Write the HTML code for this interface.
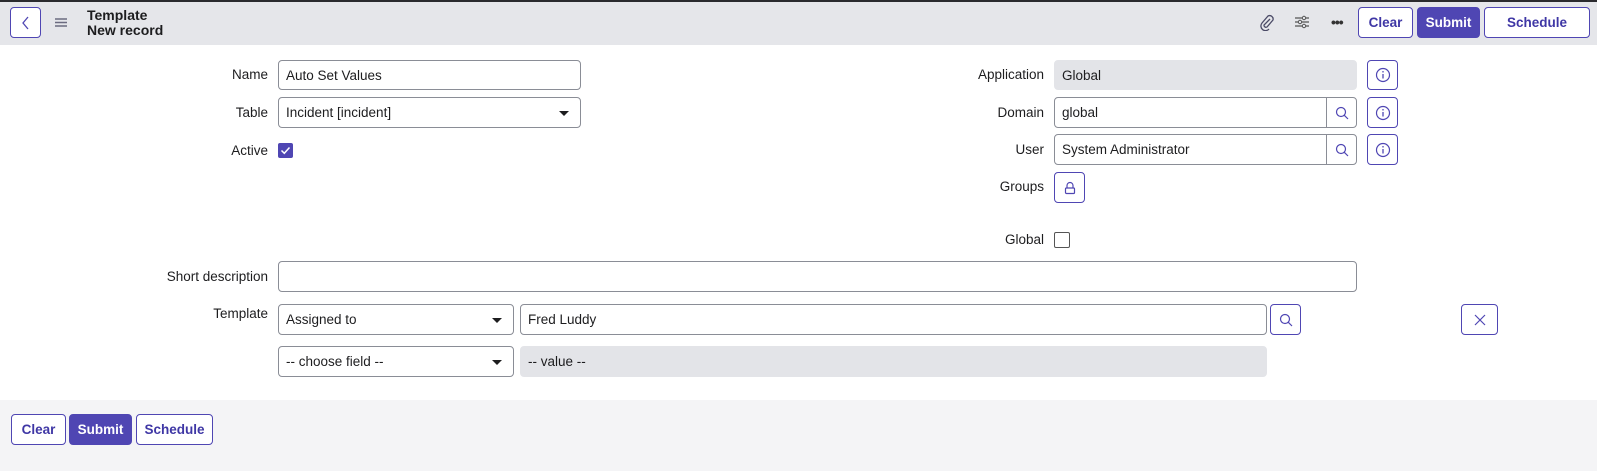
<!DOCTYPE html>
<html><head><style>
*{box-sizing:border-box;margin:0;padding:0}
body{width:1597px;height:471px;position:relative;background:#fff;font-family:"Liberation Sans",sans-serif;font-size:13.5px;color:#1d1d1f;overflow:hidden}
.a{position:absolute}
.hdr{left:0;top:0;width:1597px;height:45px;background:#e5e6ea;border-top:2px solid #2a2a2e}
.btn{position:absolute;border:1px solid #4f46b3;border-radius:4px;background:#fff;color:#3f37a5;font-weight:bold;font-size:13.5px;display:flex;align-items:center;justify-content:center}
.pri{background:#4f46b3;color:#fff}
.lbl{position:absolute;text-align:right;width:200px;font-size:13.5px}
.inp{position:absolute;border:1px solid #8a8d96;border-radius:4px;background:#fff;padding-left:7px;display:flex;align-items:center;font-size:13.5px}
.ro{background:#e3e4e8;border-color:#e3e4e8}
.arr{position:absolute;right:11px;top:50%;margin-top:-2px;width:0;height:0;border-left:5px solid transparent;border-right:5px solid transparent;border-top:5px solid #1d1d1f}
.sb{position:absolute;top:0;right:0;bottom:0;width:30px;border-left:1px solid #8a8d96;display:flex;align-items:center;justify-content:center}
.ib{position:absolute;border:1px solid #4f46b3;border-radius:4px;background:#fff;display:flex;align-items:center;justify-content:center}
</style></head><body>
<div class="a hdr"></div>
<div class="ib" style="left:10px;top:7px;width:31px;height:31px"><svg width="12" height="14" viewBox="0 0 12 14"><path d="M8 1 L3 7 L8 13" fill="none" stroke="#4f46b3" stroke-width="1.3"/></svg></div>
<svg class="a" style="left:55px;top:18px" width="12" height="9"><path d="M0 1H12M0 4.5H12M0 8H12" stroke="#6b6b80" stroke-width="1.4"/></svg>
<div class="a" style="left:87px;top:8px;font-weight:bold;font-size:14px;line-height:15px">Template<br>New record</div>
<svg class="a" style="left:1259px;top:14px" width="16" height="17" viewBox="0 0 16 17"><path d="M11 5 L5 11 A2 2 0 0 0 8 13 L14 6 A3.5 3.5 0 0 0 9 2 L3 9 A4.5 4.5 0 0 0 10 15" fill="none" stroke="#4a4a66" stroke-width="1.3"/></svg>
<svg class="a" style="left:1295px;top:15px" width="14" height="14"><path d="M0 3H14M0 7H14M0 11H14" stroke="#555" stroke-width="1.2"/><circle cx="9" cy="3" r="1.7" fill="#e5e6ea" stroke="#555"/><circle cx="5" cy="7" r="1.7" fill="#e5e6ea" stroke="#555"/><circle cx="9" cy="11" r="1.7" fill="#e5e6ea" stroke="#555"/></svg>
<div class="a" style="left:1331px;top:14px;font-weight:bold;font-size:14px;color:#333;letter-spacing:-1px">•••</div>
<div class="btn" style="left:1358px;top:7px;width:55px;height:31px">Clear</div>
<div class="btn pri" style="left:1417px;top:7px;width:63px;height:31px">Submit</div>
<div class="btn" style="left:1484px;top:7px;width:106px;height:31px">Schedule</div>

<div class="lbl" style="left:68px;top:67px">Name</div>
<div class="inp" style="left:278px;top:60px;width:303px;height:30px">Auto Set Values</div>
<div class="lbl" style="left:68px;top:105px">Table</div>
<div class="inp" style="left:278px;top:97px;width:303px;height:31px">Incident [incident]<span class="arr"></span></div>
<div class="lbl" style="left:68px;top:143px">Active</div>
<div class="a" style="left:278px;top:143px;width:15px;height:15px;background:#4f46b3;border-radius:2px"><svg width="15" height="15"><path d="M3.5 7.5L6.3 10.3L11.5 4.5" fill="none" stroke="#fff" stroke-width="1.5"/></svg></div>

<div class="lbl" style="left:844px;top:67px">Application</div>
<div class="inp ro" style="left:1054px;top:60px;width:303px;height:30px">Global</div>
<div class="lbl" style="left:844px;top:105px">Domain</div>
<div class="inp" style="left:1054px;top:97px;width:303px;height:31px">global<div class="sb"><svg width="14" height="14"><circle cx="6" cy="6" r="4.5" fill="none" stroke="#4f46b3" stroke-width="1.2"/><path d="M9.3 9.3L13 13" stroke="#4f46b3" stroke-width="1.2"/></svg></div></div>
<div class="lbl" style="left:844px;top:142px">User</div>
<div class="inp" style="left:1054px;top:134px;width:303px;height:31px">System Administrator<div class="sb"><svg width="14" height="14"><circle cx="6" cy="6" r="4.5" fill="none" stroke="#4f46b3" stroke-width="1.2"/><path d="M9.3 9.3L13 13" stroke="#4f46b3" stroke-width="1.2"/></svg></div></div>
<div class="lbl" style="left:844px;top:179px">Groups</div>
<div class="ib" style="left:1054px;top:172px;width:31px;height:31px"><svg width="14" height="14"><path d="M4 7V4.5A3 3 0 0 1 10 4.5V7" fill="none" stroke="#4f46b3" stroke-width="1.2"/><rect x="2.5" y="7" width="9" height="5.5" rx="1" fill="none" stroke="#4f46b3" stroke-width="1.2"/></svg></div>
<div class="lbl" style="left:844px;top:232px">Global</div>
<div class="a" style="left:1054px;top:232px;width:16px;height:16px;border:1px solid #555;border-radius:2px"></div>
<div class="ib" style="left:1367px;top:60px;width:31px;height:30px"><svg width="16" height="16"><circle cx="8" cy="8" r="6.5" fill="none" stroke="#4f46b3" stroke-width="1.2"/><path d="M8 7V11.5" stroke="#4f46b3" stroke-width="1.3"/><circle cx="8" cy="4.8" r=".8" fill="#4f46b3"/></svg></div>
<div class="ib" style="left:1367px;top:97px;width:31px;height:31px"><svg width="16" height="16"><circle cx="8" cy="8" r="6.5" fill="none" stroke="#4f46b3" stroke-width="1.2"/><path d="M8 7V11.5" stroke="#4f46b3" stroke-width="1.3"/><circle cx="8" cy="4.8" r=".8" fill="#4f46b3"/></svg></div>
<div class="ib" style="left:1367px;top:134px;width:31px;height:31px"><svg width="16" height="16"><circle cx="8" cy="8" r="6.5" fill="none" stroke="#4f46b3" stroke-width="1.2"/><path d="M8 7V11.5" stroke="#4f46b3" stroke-width="1.3"/><circle cx="8" cy="4.8" r=".8" fill="#4f46b3"/></svg></div>

<div class="lbl" style="left:68px;top:269px">Short description</div>
<div class="inp" style="left:278px;top:261px;width:1079px;height:31px"></div>
<div class="lbl" style="left:68px;top:306px">Template</div>
<div class="inp" style="left:278px;top:304px;width:236px;height:31px">Assigned to<span class="arr"></span></div>
<div class="inp" style="left:520px;top:304px;width:747px;height:31px">Fred Luddy</div>
<div class="ib" style="left:1270px;top:304px;width:31px;height:31px"><svg width="14" height="14"><circle cx="6" cy="6" r="4.5" fill="none" stroke="#4f46b3" stroke-width="1.2"/><path d="M9.3 9.3L13 13" stroke="#4f46b3" stroke-width="1.2"/></svg></div>
<div class="ib" style="left:1461px;top:304px;width:37px;height:31px"><svg width="12" height="12"><path d="M1 1L11 11M11 1L1 11" stroke="#4f46b3" stroke-width="1.2"/></svg></div>
<div class="inp" style="left:278px;top:346px;width:236px;height:31px">-- choose field --<span class="arr"></span></div>
<div class="inp ro" style="left:520px;top:346px;width:747px;height:31px">-- value --</div>

<div class="a" style="left:0;top:400px;width:1597px;height:71px;background:#f4f4f6"></div>
<div class="btn" style="left:11px;top:414px;width:55px;height:31px">Clear</div>
<div class="btn pri" style="left:69px;top:414px;width:63px;height:31px">Submit</div>
<div class="btn" style="left:136px;top:414px;width:77px;height:31px">Schedule</div>
</body></html>
